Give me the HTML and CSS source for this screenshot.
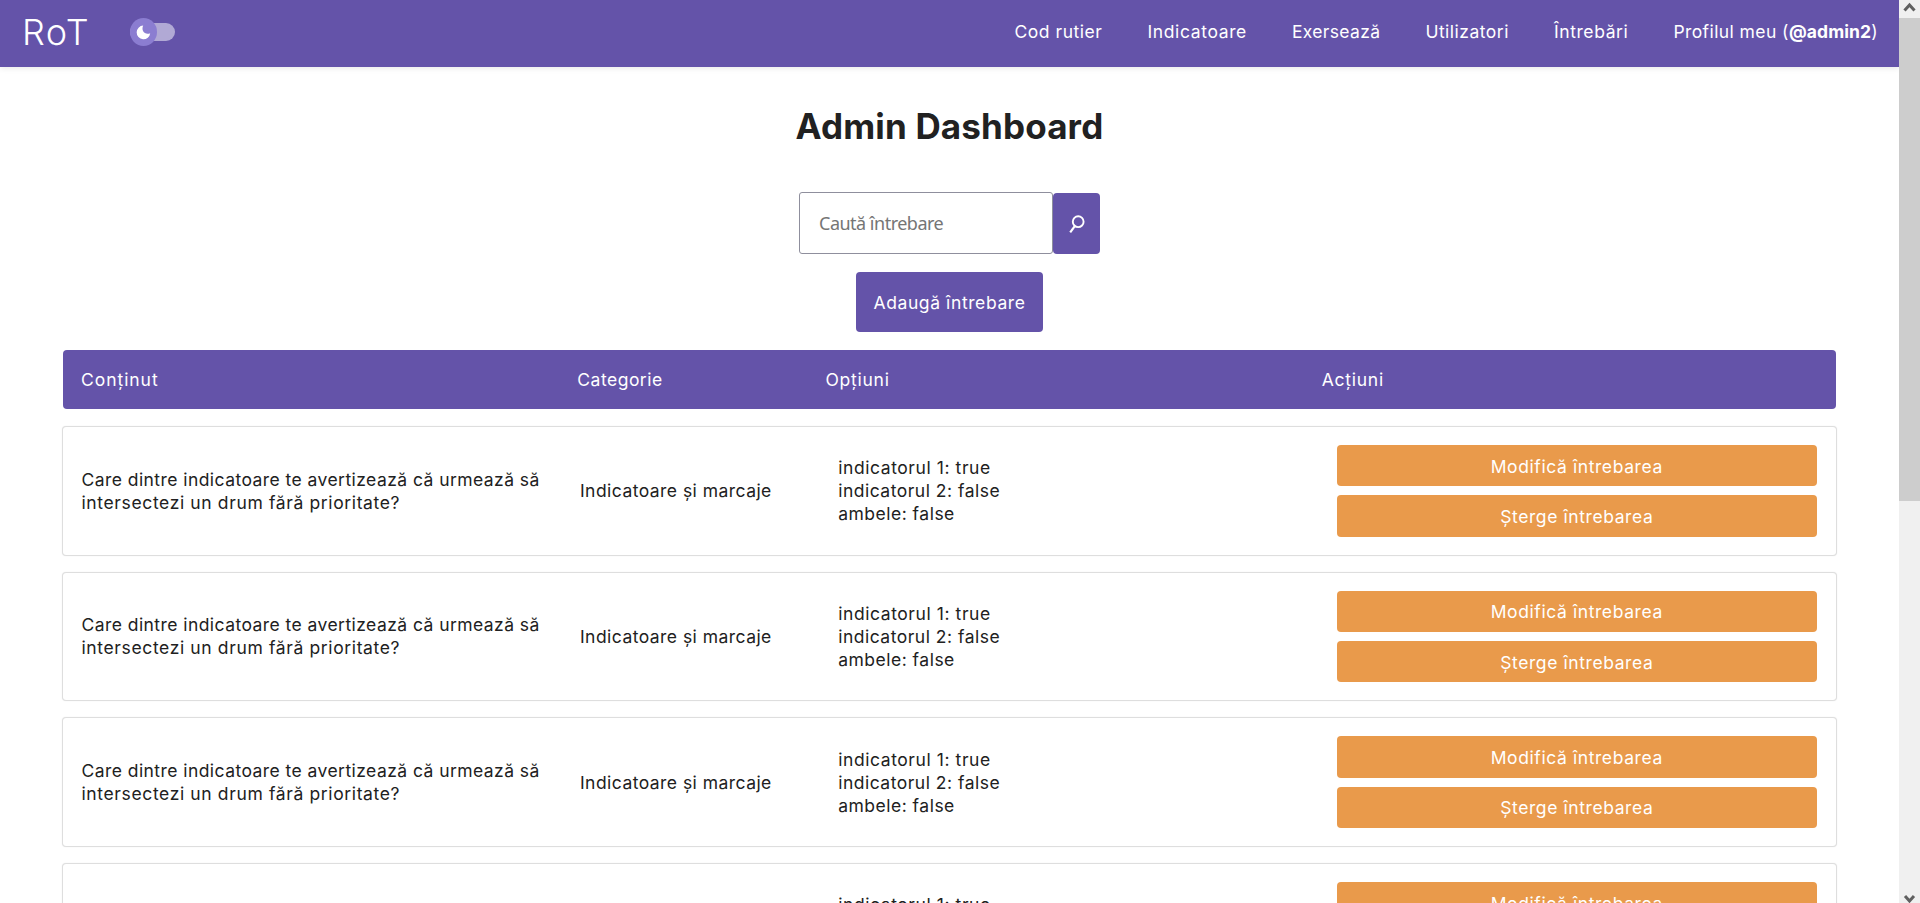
FILE: index.html
```
<!DOCTYPE html>
<html lang="ro">
<head>
<meta charset="utf-8">
<title>RoT - Admin Dashboard</title>
<link rel="stylesheet" href="styles.css">
</head>
<body>
<div class="page">
  <header class="navbar">
    <div class="logo">RoT</div>
    <div class="toggle">
      <div class="knob">
        <svg width="15" height="15" viewBox="0 0 15 15"><path fill="#fff" d="M7.200.6A6.800 6.800 0 1 0 14.200 8.200C12.800 9 10.600 9.200 8.900 8.100C6.300 6.500 6 3.200 7.200.6Z"/></svg>
      </div>
    </div>
    <nav class="links">
      <a class="t-cod">Cod rutier</a>
      <a class="t-ind">Indicatoare</a>
      <a class="t-ex">Exersează</a>
      <a class="t-ut">Utilizatori</a>
      <a class="t-in">Întrebări</a>
      <a class="t-pr">Profilul meu (<b>@admin2</b>)</a>
    </nav>
  </header>
  <main class="content">
    <h1 class="title">Admin Dashboard</h1>
    <form class="search">
      <input class="search-input" type="text" placeholder="Caută întrebare">
      <button class="search-btn" type="button">
        <svg width="16" height="19" viewBox="0 0 16 19" fill="none" stroke="#fff"><circle cx="9.200" cy="6.700" r="5.400" stroke-width="1.900"/><path stroke-width="2.200" d="M5.800 11.200L1.200 17.400"/></svg>
      </button>
    </form>
    <button class="add-btn" type="button">Adaugă întrebare</button>
    <section class="table">
      <div class="head">
        <span class="h-con">Conținut</span><span class="h-cat">Categorie</span><span class="h-opt">Opțiuni</span><span class="h-act">Acțiuni</span>
      </div>
      <div class="row">
        <p class="question"><span class="q1">Care dintre indicatoare te avertizează că urmează să</span> <span class="q2">intersectezi un drum fără prioritate?</span></p>
        <p class="category">Indicatoare și marcaje</p>
        <ul class="options"><li class="o1">indicatorul 1: true</li><li>indicatorul 2: false</li><li>ambele: false</li></ul>
        <div class="actions"><button>Modifică întrebarea</button><button>Șterge întrebarea</button></div>
      </div>
      <div class="row">
        <p class="question"><span class="q1">Care dintre indicatoare te avertizează că urmează să</span> <span class="q2">intersectezi un drum fără prioritate?</span></p>
        <p class="category">Indicatoare și marcaje</p>
        <ul class="options"><li class="o1">indicatorul 1: true</li><li>indicatorul 2: false</li><li>ambele: false</li></ul>
        <div class="actions"><button>Modifică întrebarea</button><button>Șterge întrebarea</button></div>
      </div>
      <div class="row">
        <p class="question"><span class="q1">Care dintre indicatoare te avertizează că urmează să</span> <span class="q2">intersectezi un drum fără prioritate?</span></p>
        <p class="category">Indicatoare și marcaje</p>
        <ul class="options"><li class="o1">indicatorul 1: true</li><li>indicatorul 2: false</li><li>ambele: false</li></ul>
        <div class="actions"><button>Modifică întrebarea</button><button>Șterge întrebarea</button></div>
      </div>
      <div class="row">
        <p class="question"><span class="q1">Care dintre indicatoare te avertizează că urmează să</span> <span class="q2">intersectezi un drum fără prioritate?</span></p>
        <p class="category">Indicatoare și marcaje</p>
        <ul class="options"><li class="o1">indicatorul 1: true</li><li>indicatorul 2: false</li><li>ambele: false</li></ul>
        <div class="actions"><button>Modifică întrebarea</button><button>Șterge întrebarea</button></div>
      </div>
    </section>
  </main>
</div>
<div class="scrollbar">
  <svg class="arrow" width="21" height="18" viewBox="0 0 21 18"><path d="M5.500 10.500L10.500 5L15.500 10.500" fill="none" stroke="#606060" stroke-width="3"/></svg>
  <div class="thumb"></div>
  <svg class="arrow arrow-down" width="21" height="10" viewBox="0 0 21 10"><path d="M6 3L10.500 8L15 3" fill="none" stroke="#606060" stroke-width="3"/></svg>
</div>
</body>
</html>
```
FILE: styles.css
```
* { box-sizing: border-box; }
body {
  margin: 0;
  height: 903px;
  display: flex;
  overflow: hidden;
  background: #fff;
  color: #212121;
  font-family: Inter, "Noto Sans", sans-serif;
  font-size: 17.5px;
  line-height: 23px;
}
button, input { font: inherit; letter-spacing: inherit; margin: 0; border: 0; }
p, ul, h1 { margin: 0; padding: 0; }
ul { list-style: none; }

.page { flex: 1; height: 903px; overflow: hidden; }

/* Top bar */
.navbar {
  height: 67px;
  padding: 0 21px 3px 22px;
  display: flex;
  align-items: center;
  background: #6453a9;
  color: #fff;
  box-shadow: 0 1px 6px rgba(0, 0, 0, .1);
}
.logo { width: 108px; padding-bottom: 1px; font-size: 36px; font-weight: 350; line-height: 40px; letter-spacing: 1.4px; }
.toggle { width: 45px; height: 18px; border-radius: 9px; background: #b1a9d5; display: flex; align-items: center; }
.knob {
  flex: none;
  width: 27px;
  height: 28px;
  border-radius: 50%;
  background: #8b7dd1;
  display: flex;
  align-items: center;
  justify-content: center;
}
.links { margin-left: auto; padding-bottom: 2px; display: flex; gap: 45px; white-space: nowrap; }
.t-cod { letter-spacing: .54px; }
.t-ind { letter-spacing: .63px; }
.t-ex { letter-spacing: .34px; }
.t-ut { letter-spacing: .49px; }
.t-in { letter-spacing: .6px; }
.t-pr { letter-spacing: .42px; }
.t-pr b { letter-spacing: .1px; }

/* Heading and search */
.content { display: flex; flex-direction: column; align-items: center; padding-top: 36px; }
.title { font-size: 35px; line-height: 46px; letter-spacing: .15px; }
.search { margin-top: 43px; display: flex; align-items: flex-end; }
.search-input {
  width: 254px;
  height: 62px;
  padding: 0 19px;
  border: 1px solid #8f8f9d;
  border-radius: 3px;
  font-family: "Noto Sans", sans-serif;
  font-size: 18px;
  letter-spacing: -.5px;
}
.search-input::placeholder { color: #757575; }
.search-btn {
  width: 47px;
  height: 61px;
  padding: 2px 0 0;
  border-radius: 4px;
  background: #6453a9;
  display: flex;
  align-items: center;
  justify-content: center;
}
.add-btn {
  width: 187px;
  height: 60px;
  margin: 18px 0;
  padding: 0;
  border-radius: 4px;
  background: #6453a9;
  color: #fff;
  letter-spacing: .6px;
}

/* Question table */
.table { width: 1773px; display: flex; flex-direction: column; gap: 18px; }
.head {
  height: 59px;
  padding: 0 18px;
  border-radius: 4px;
  background: #6453a9;
  color: #fff;
  display: grid;
  grid-template-columns: 2fr 1fr 2fr 2fr;
  align-items: center;
}
.h-con { letter-spacing: .95px; }
.h-cat { letter-spacing: .5px; }
.h-opt, .h-act { letter-spacing: .75px; }
.row {
  height: 127.67px;
  padding: 18px 19px 18px 18.5px;
  border-radius: 3px;
  box-shadow: 0 0 0 1px #dedede, 0 0 2px 1px rgba(0, 0, 0, .06);
  display: grid;
  grid-template-columns: 2fr 1fr 2fr 2fr;
  column-gap: 18px;
  align-items: center;
  white-space: nowrap;
}
.question { white-space: normal; }
.q1 { letter-spacing: .44px; white-space: nowrap; }
.q2 { letter-spacing: .63px; }
.category { letter-spacing: .46px; }
.options { letter-spacing: .5px; }
.options .o1 { letter-spacing: .58px; }
.actions { display: grid; gap: 9px; }
.actions button {
  height: 41.33px;
  padding: 1px 0 0;
  border-radius: 4px;
  background: #e99a4b;
  color: #fff;
  letter-spacing: .59px;
}

/* Window scrollbar */
.scrollbar { width: 21px; height: 903px; background: #f0f0f0; display: flex; flex-direction: column; }
.arrow { flex: none; display: block; }
.thumb { height: 483px; background: #cdcdcd; }
.arrow-down { margin-top: auto; }
```
